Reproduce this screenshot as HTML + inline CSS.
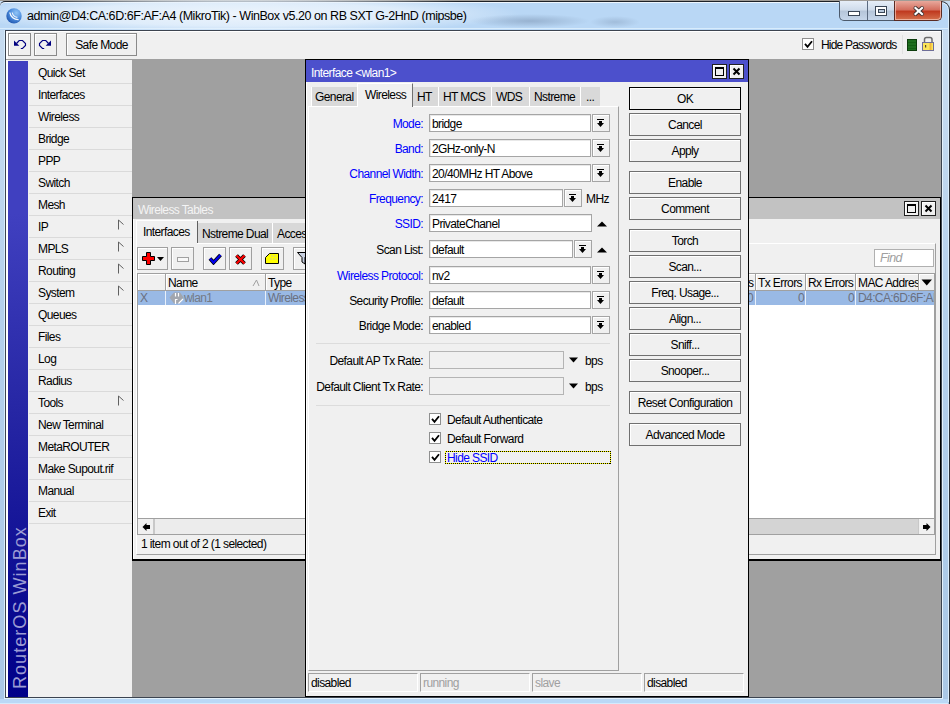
<!DOCTYPE html>
<html><head><meta charset="utf-8">
<style>
*{box-sizing:border-box}
html,body{margin:0;padding:0}
body{width:950px;height:704px;position:relative;overflow:hidden;background:#b4d0ec;font-family:"Liberation Sans",sans-serif;font-size:12px;color:#000}
.a{position:absolute}
.t{position:absolute;white-space:nowrap;line-height:13px;letter-spacing:-0.6px}
.btn{position:absolute;background:#f0f0f0;border:1px solid #707070;box-shadow:inset 1px 1px 0 #fff}
.btn span{position:absolute;left:0;right:0;text-align:center;white-space:nowrap;line-height:13px;letter-spacing:-0.6px}
.fld{position:absolute;background:#fff;border:1px solid #a5a5a5;box-shadow:inset 1px 1px 0 #e8e8e8}
.fld span{position:absolute;left:2px;top:3px;white-space:nowrap;line-height:13px;letter-spacing:-0.6px}
.dd{position:absolute;background:#f0f0f0;border:1px solid #a5a5a5;box-shadow:inset 1px 1px 0 #fff}
.lbl{position:absolute;white-space:nowrap;line-height:13px;text-align:right;letter-spacing:-0.6px}
</style></head><body>

<div class="a" style="left:0px;top:0px;width:950px;height:704px;background:linear-gradient(180deg,#c8dcf0 0,#c4daf0 15%,#b4d0ec 45%,#aac8e6 100%)"></div>
<div class="a" style="left:0px;top:0px;width:950px;height:1px;background:#a09c96"></div>
<div class="a" style="left:0px;top:1px;width:950px;height:29px;background:#b9d7f5;border-top:1px solid #1e2228;border-right:1px solid #2a3038;border-radius:5px 9px 0 0;box-shadow:inset 0 1px 0 #eef6fe,inset -1px 0 0 #dceefc"></div>
<div class="a" style="left:0px;top:28px;width:950px;height:1px;background:#d8ecfc"></div>
<div class="a" style="left:-40px;top:-6px;width:560px;height:40px;background:radial-gradient(ellipse 50% 50% at 50% 50%,rgba(240,246,252,0.95) 0,rgba(232,242,252,0.8) 60%,rgba(220,236,250,0) 100%)"></div>
<div class="a" style="left:470px;top:14px;width:120px;height:14px;background:radial-gradient(ellipse 50% 50% at 50% 50%,rgba(90,110,140,0.35),rgba(90,110,140,0) 100%)"></div>
<div class="a" style="left:590px;top:16px;width:50px;height:12px;background:radial-gradient(ellipse 50% 50% at 50% 50%,rgba(90,110,140,0.25),rgba(90,110,140,0) 100%)"></div>
<div class="a" style="left:949px;top:10px;width:1px;height:694px;background:#2a3038"></div>
<div class="a" style="left:948px;top:10px;width:1px;height:692px;background:#dceefc"></div>
<div class="a" style="left:4px;top:30px;width:1px;height:668px;background:#d8ecfc"></div>
<div class="a" style="left:4px;top:698px;width:939px;height:1px;background:#e4f2fc"></div>
<div class="a" style="left:0px;top:699px;width:948px;height:4px;background:#bad8f6"></div>
<div class="a" style="left:0px;top:703px;width:948px;height:1px;background:#d4eafc"></div>
<div class="a" style="left:942px;top:30px;width:1px;height:669px;background:#e4f2fc"></div>
<svg class="a" style="left:6px;top:8px" width="16" height="16" viewBox="0 0 16 16"><defs><radialGradient id="lg" cx="0.65" cy="0.3" r="0.75"><stop offset="0" stop-color="#90c4f6"/><stop offset="0.55" stop-color="#4c8cdc"/><stop offset="1" stop-color="#2258b0"/></radialGradient></defs><circle cx="8" cy="7.9" r="7.7" fill="url(#lg)"/><path d="M3.8 4.5 A8.5 8.5 0 0 0 12.6 11.7" fill="none" stroke="#fff" stroke-width="1.3" opacity="0.95"/><path d="M6.2 4.5 A6.2 6.2 0 0 0 11.4 9.4" fill="none" stroke="#fff" stroke-width="1.1" opacity="0.9"/></svg>
<div class="t" style="left:27px;top:9px;font-size:12.5px;line-height:14px;letter-spacing:-0.45px">admin@D4:CA:6D:6F:AF:A4 (MikroTik) - WinBox v5.20 on RB SXT G-2HnD (mipsbe)</div>
<div class="a" style="left:839px;top:1px;width:56px;height:20px;border:1px solid #4c5a6c;border-top:none;border-radius:0 0 0 5px;background:linear-gradient(180deg,#e6eef8 0,#d0dceb 45%,#b6c6da 55%,#c6d6ea 100%)"></div>
<div class="a" style="left:867px;top:1px;width:1px;height:19px;background:#5a6a80"></div>
<div class="a" style="left:894px;top:1px;width:48px;height:20px;border:1px solid #5a2a22;border-top:none;border-radius:0 0 5px 0;background:linear-gradient(180deg,#e8a89c 0,#d47060 45%,#c03a20 55%,#d4704c 100%)"></div>
<div class="a" style="left:848px;top:11px;width:12px;height:5px;background:#fff;border:1px solid #3a4656"></div>
<div class="a" style="left:875px;top:6px;width:12px;height:10px;background:#fff;border:1px solid #3a4656"></div>
<div class="a" style="left:878px;top:9px;width:7px;height:4px;background:#b9c9dc;border:1px solid #3a4656"></div>
<div class="a" style="left:895px;top:2px;width:46px;height:18px;border:1px solid rgba(255,220,210,0.6);border-top:none;border-radius:0 0 4px 0"></div>
<svg class="a" style="left:912px;top:5px" width="14" height="12"><path d="M3.5 3 L10 9 M10 3 L3.5 9" stroke="#3a3030" stroke-width="4" stroke-linecap="round"/><path d="M3.5 3 L10 9 M10 3 L3.5 9" stroke="#fff" stroke-width="2.2" stroke-linecap="square"/></svg>
<div class="a" style="left:5px;top:30px;width:937px;height:668px;background:#f0f0f0;border:1px solid #3c4450;box-shadow:inset 2px 1px 0 #fff"></div>
<div class="btn" style="left:8px;top:33px;width:23px;height:23px;border-color:#8a8a8a;"></div>
<div class="btn" style="left:34px;top:33px;width:23px;height:23px;border-color:#8a8a8a;"></div>
<svg class="a" style="left:13px;top:38px" width="16" height="14"><path d="M3.5 5.5 L6.2 2.5 H9.5 L12.5 5.5 V7.5 L9.5 10.5 H7.8" fill="none" stroke="#000080" stroke-width="1.15"/><path d="M1 2.5 V7.8 H6.3 Z" fill="#000080"/></svg>
<svg class="a" style="left:36px;top:38px;transform:scaleX(-1)" width="16" height="14"><path d="M3.5 5.5 L6.2 2.5 H9.5 L12.5 5.5 V7.5 L9.5 10.5 H7.8" fill="none" stroke="#000080" stroke-width="1.15"/><path d="M1 2.5 V7.8 H6.3 Z" fill="#000080"/></svg>
<div class="btn" style="left:66px;top:33px;width:71px;height:23px;border-color:#8a8a8a;"><span style="top:5px">Safe Mode</span></div>
<div class="a" style="left:802px;top:38px;width:12px;height:12px;background:#fff;border:1px solid #8e8e8e"></div>
<svg class="a" style="left:804px;top:40px" width="9" height="9" viewBox="0 0 9 9"><path d="M1 3.8 L3.5 6.8 L8 1.2" fill="none" stroke="#000" stroke-width="1.8"/></svg>
<div class="t" style="left:821px;top:39px;letter-spacing:-0.8px">Hide Passwords</div>
<div class="a" style="left:902px;top:35px;width:1px;height:19px;background:#e0e0e0"></div>
<div class="a" style="left:907px;top:39px;width:10px;height:12px;background:repeating-linear-gradient(180deg,#1e6e1e 0,#1e6e1e 2px,#146014 2px,#146014 3px);border:1px solid #0c3c0c"></div>
<svg class="a" style="left:921px;top:36px" width="14" height="16"><path d="M3.5 6.5 V3.5 Q3.5 1.5 5.5 1.5 H9 Q11 1.5 11 3.5 V6.5" stroke="#6c6c6c" stroke-width="1.5" fill="none"/><rect x="1.5" y="6.5" width="11" height="8" fill="#fbe45a" stroke="#6e6e98" stroke-width="1"/><rect x="8.5" y="7" width="2" height="7" fill="#f2b838"/><rect x="4" y="9" width="1.2" height="2.5" fill="#5a4a20"/></svg>
<div class="a" style="left:6px;top:59px;width:935px;height:1px;background:#a0a0a0"></div>
<div class="a" style="left:132px;top:60px;width:809px;height:637px;background:#a0a0a0"></div>
<div class="a" style="left:8px;top:61px;width:20px;height:636px;background:linear-gradient(180deg,#4040c0 0,#4040c0 24%,#2626a4 55%,#0a0a90 86%,#000088 100%)"></div>
<div class="t" style="left:10px;top:689px;font-size:18px;line-height:20px;color:#9c9cd4;letter-spacing:1.05px;transform:rotate(-90deg);transform-origin:0 0">RouterOS WinBox</div>
<div class="a" style="left:28px;top:61px;width:104px;height:636px;background:#f0f0f0"></div>
<div class="t" style="left:38px;top:67px;">Quick Set</div>
<div class="a" style="left:29px;top:83px;width:103px;height:1px;background:#dadada"></div>
<div class="t" style="left:38px;top:89px;">Interfaces</div>
<div class="a" style="left:29px;top:105px;width:103px;height:1px;background:#dadada"></div>
<div class="t" style="left:38px;top:111px;">Wireless</div>
<div class="a" style="left:29px;top:127px;width:103px;height:1px;background:#dadada"></div>
<div class="t" style="left:38px;top:133px;">Bridge</div>
<div class="a" style="left:29px;top:149px;width:103px;height:1px;background:#dadada"></div>
<div class="t" style="left:38px;top:155px;">PPP</div>
<div class="a" style="left:29px;top:171px;width:103px;height:1px;background:#dadada"></div>
<div class="t" style="left:38px;top:177px;">Switch</div>
<div class="a" style="left:29px;top:193px;width:103px;height:1px;background:#dadada"></div>
<div class="t" style="left:38px;top:199px;">Mesh</div>
<div class="a" style="left:29px;top:215px;width:103px;height:1px;background:#dadada"></div>
<div class="t" style="left:38px;top:221px;">IP</div>
<div class="a" style="left:29px;top:237px;width:103px;height:1px;background:#dadada"></div>
<svg class="a" style="left:117px;top:219px" width="8" height="12"><path d="M1.5 1 V10.5 M1.5 1 L6.5 5.5" stroke="#606060" stroke-width="1" fill="none"/></svg>
<div class="t" style="left:38px;top:243px;">MPLS</div>
<div class="a" style="left:29px;top:259px;width:103px;height:1px;background:#dadada"></div>
<svg class="a" style="left:117px;top:241px" width="8" height="12"><path d="M1.5 1 V10.5 M1.5 1 L6.5 5.5" stroke="#606060" stroke-width="1" fill="none"/></svg>
<div class="t" style="left:38px;top:265px;">Routing</div>
<div class="a" style="left:29px;top:281px;width:103px;height:1px;background:#dadada"></div>
<svg class="a" style="left:117px;top:263px" width="8" height="12"><path d="M1.5 1 V10.5 M1.5 1 L6.5 5.5" stroke="#606060" stroke-width="1" fill="none"/></svg>
<div class="t" style="left:38px;top:287px;">System</div>
<div class="a" style="left:29px;top:303px;width:103px;height:1px;background:#dadada"></div>
<svg class="a" style="left:117px;top:285px" width="8" height="12"><path d="M1.5 1 V10.5 M1.5 1 L6.5 5.5" stroke="#606060" stroke-width="1" fill="none"/></svg>
<div class="t" style="left:38px;top:309px;">Queues</div>
<div class="a" style="left:29px;top:325px;width:103px;height:1px;background:#dadada"></div>
<div class="t" style="left:38px;top:331px;">Files</div>
<div class="a" style="left:29px;top:347px;width:103px;height:1px;background:#dadada"></div>
<div class="t" style="left:38px;top:353px;">Log</div>
<div class="a" style="left:29px;top:369px;width:103px;height:1px;background:#dadada"></div>
<div class="t" style="left:38px;top:375px;">Radius</div>
<div class="a" style="left:29px;top:391px;width:103px;height:1px;background:#dadada"></div>
<div class="t" style="left:38px;top:397px;">Tools</div>
<div class="a" style="left:29px;top:413px;width:103px;height:1px;background:#dadada"></div>
<svg class="a" style="left:117px;top:395px" width="8" height="12"><path d="M1.5 1 V10.5 M1.5 1 L6.5 5.5" stroke="#606060" stroke-width="1" fill="none"/></svg>
<div class="t" style="left:38px;top:419px;">New Terminal</div>
<div class="a" style="left:29px;top:435px;width:103px;height:1px;background:#dadada"></div>
<div class="t" style="left:38px;top:441px;">MetaROUTER</div>
<div class="a" style="left:29px;top:457px;width:103px;height:1px;background:#dadada"></div>
<div class="t" style="left:38px;top:463px;">Make Supout.rif</div>
<div class="a" style="left:29px;top:479px;width:103px;height:1px;background:#dadada"></div>
<div class="t" style="left:38px;top:485px;">Manual</div>
<div class="a" style="left:29px;top:501px;width:103px;height:1px;background:#dadada"></div>
<div class="t" style="left:38px;top:507px;">Exit</div>
<div class="a" style="left:29px;top:523px;width:103px;height:1px;background:#dadada"></div>
<div class="a" style="left:132px;top:197px;width:809px;height:364px;background:#f0f0f0;border:1px solid #000;border-bottom-width:2px;border-right:none;box-shadow:inset 1px 1px 0 #fff"></div>
<div class="a" style="left:133px;top:198px;width:807px;height:21px;background:#c2c2c2"></div>
<div class="a" style="left:940px;top:197px;width:1px;height:364px;background:#000"></div>
<div class="t" style="left:138px;top:204px;color:#f4f4f4">Wireless Tables</div>
<div class="btn" style="left:904px;top:201px;width:15px;height:15px;border-color:#202020;"></div>
<div class="a" style="left:907px;top:204px;width:9px;height:9px;border:1px solid #000;border-top-width:2px"></div>
<div class="btn" style="left:921px;top:201px;width:15px;height:15px;border-color:#202020;"></div>
<svg class="a" style="left:924px;top:204px" width="9" height="9"><path d="M1.5 1.5 L7.5 7.5 M7.5 1.5 L1.5 7.5" stroke="#000" stroke-width="2"/></svg>
<div class="a" style="left:136px;top:243px;width:800px;height:312px;border-top:1px solid #fff;border-left:1px solid #fff;border-right:1px solid #a0a0a0;border-bottom:1px solid #a0a0a0"></div>
<div class="a" style="left:197px;top:223px;width:75px;height:20px;background:#d8d8d8;border-left:1px solid #707070"></div>
<div class="t" style="left:202px;top:228px;">Nstreme Dual</div>
<div class="a" style="left:272px;top:223px;width:40px;height:20px;background:#d8d8d8;border-left:1px solid #fff"></div>
<div class="t" style="left:277px;top:228px;">Access List</div>
<div class="a" style="left:136px;top:220px;width:61px;height:24px;background:#f0f0f0;border-top:1px solid #fff;border-left:1px solid #fff"></div>
<div class="a" style="left:197px;top:221px;width:1px;height:22px;background:#606060"></div>
<div class="t" style="left:143px;top:226px;">Interfaces</div>
<div class="btn" style="left:137px;top:247px;width:31px;height:23px;border-color:#a0a0a0;"></div>
<svg class="a" style="left:142px;top:252px" width="24" height="14"><path d="M4.5 0.5 H8.5 V4.5 H12.5 V8.5 H8.5 V12.5 H4.5 V8.5 H0.5 V4.5 H4.5 Z" fill="#ff0000" stroke="#000" stroke-width="1"/><path d="M15 5 H22 L18.5 9 Z" fill="#000"/></svg>
<div class="btn" style="left:171px;top:247px;width:23px;height:23px;border-color:#a0a0a0;"></div>
<div class="a" style="left:177px;top:257px;width:12px;height:5px;border:1px solid #a0a0a0;background:#f8f8f8"></div>
<div class="btn" style="left:203px;top:247px;width:23px;height:23px;border-color:#a0a0a0;"></div>
<svg class="a" style="left:208px;top:253px" width="15" height="12"><path d="M2 5.5 L5.5 9.5 L12.5 2" fill="none" stroke="#000" stroke-width="3.8"/><path d="M2 5.5 L5.5 9.5 L12.5 2" fill="none" stroke="#0000f0" stroke-width="2.2"/></svg>
<div class="btn" style="left:229px;top:247px;width:23px;height:23px;border-color:#a0a0a0;"></div>
<svg class="a" style="left:234px;top:253px" width="13" height="13"><path d="M2.5 2.5 L10.5 10.5 M10.5 2.5 L2.5 10.5" fill="none" stroke="#000" stroke-width="3.8"/><path d="M2.5 2.5 L10.5 10.5 M10.5 2.5 L2.5 10.5" fill="none" stroke="#ff0000" stroke-width="2.2"/></svg>
<div class="btn" style="left:261px;top:247px;width:23px;height:23px;border-color:#a0a0a0;"></div>
<svg class="a" style="left:265px;top:253px" width="15" height="11"><path d="M4.5 0.5 H13.5 V10.5 H0.5 V4.5 Z" fill="#ffff00" stroke="#000" stroke-width="1"/><path d="M6 3 H12 M5 6 H12" stroke="#c8c8a0" stroke-width="1" stroke-dasharray="2 1"/></svg>
<div class="btn" style="left:293px;top:247px;width:23px;height:23px;border-color:#a0a0a0;"></div>
<svg class="a" style="left:297px;top:252px" width="14" height="13"><path d="M0.5 0.5 H12.5 L8 5.5 V12 L5 10 V5.5 Z" fill="#c8d0e0" stroke="#000" stroke-width="1"/></svg>
<div class="fld" style="left:874px;top:249px;width:60px;height:18px;border-color:#b0b0b0;box-shadow:none"><span style="left:5px;top:2px;color:#a0a0a0;font-style:italic;font-size:12.5px">Find</span></div>
<div class="a" style="left:137px;top:273px;width:798px;height:262px;background:#fff;border:1px solid #a0a0a0"></div>
<div class="a" style="left:138px;top:274px;width:796px;height:17px;background:#f0f0f0;border-bottom:1px solid #a0a0a0;box-shadow:inset 1px 1px 0 #fff"></div>
<div class="a" style="left:165px;top:274px;width:1px;height:16px;background:#a0a0a0"></div>
<div class="a" style="left:166px;top:274px;width:1px;height:16px;background:#fff"></div>
<div class="a" style="left:265px;top:274px;width:1px;height:16px;background:#a0a0a0"></div>
<div class="a" style="left:266px;top:274px;width:1px;height:16px;background:#fff"></div>
<div class="a" style="left:755px;top:274px;width:1px;height:16px;background:#a0a0a0"></div>
<div class="a" style="left:756px;top:274px;width:1px;height:16px;background:#fff"></div>
<div class="a" style="left:805px;top:274px;width:1px;height:16px;background:#a0a0a0"></div>
<div class="a" style="left:806px;top:274px;width:1px;height:16px;background:#fff"></div>
<div class="a" style="left:855px;top:274px;width:1px;height:16px;background:#a0a0a0"></div>
<div class="a" style="left:856px;top:274px;width:1px;height:16px;background:#fff"></div>
<div class="a" style="left:918px;top:274px;width:1px;height:16px;background:#a0a0a0"></div>
<div class="a" style="left:919px;top:274px;width:1px;height:16px;background:#fff"></div>
<div class="t" style="left:168px;top:277px;">Name</div>
<svg class="a" style="left:252px;top:279px" width="8" height="8"><path d="M1 7 L4.5 1 L7 7" fill="none" stroke="#a0a0a0" stroke-width="1"/></svg>
<div class="t" style="left:268px;top:277px;">Type</div>
<div class="t" style="left:748px;top:277px;">s</div>
<div class="t" style="left:758px;top:277px;">Tx Errors</div>
<div class="t" style="left:808px;top:277px;">Rx Errors</div>
<div class="t" style="left:858px;top:277px;width:60px;overflow:hidden">MAC Address</div>
<svg class="a" style="left:921px;top:279px" width="12" height="8"><path d="M0.5 0.5 H11 L5.75 6.5 Z" fill="#000"/></svg>
<div class="a" style="left:138px;top:291px;width:796px;height:14px;background:#99b9e5"></div>
<div class="a" style="left:165px;top:291px;width:1px;height:14px;background:#e8f0fa"></div>
<div class="a" style="left:265px;top:291px;width:1px;height:14px;background:#e8f0fa"></div>
<div class="a" style="left:755px;top:291px;width:1px;height:14px;background:#e8f0fa"></div>
<div class="a" style="left:805px;top:291px;width:1px;height:14px;background:#e8f0fa"></div>
<div class="a" style="left:855px;top:291px;width:1px;height:14px;background:#e8f0fa"></div>
<div class="t" style="left:140px;top:292px;color:#6a7080">X</div>
<svg class="a" style="left:169px;top:292px" width="16" height="13"><path d="M0.5 5.5 L5 0.5 H11 L14.5 5.5 L11 11.5 H5 Z" fill="#a2a6ae"/><path d="M6.5 1 V4.5 M9.5 1 V4.5 M6.5 12 V7.5 H8.5 M9.5 11.5 L14 7" stroke="#fff" stroke-width="1.2" fill="none"/></svg>
<div class="t" style="left:184px;top:292px;color:#747a86">wlan1</div>
<div class="t" style="left:268px;top:292px;color:#6a7080">Wireless</div>
<div class="t" style="left:747px;top:292px;color:#6a7080">0</div>
<div class="t" style="left:798px;top:292px;color:#6a7080">0</div>
<div class="t" style="left:848px;top:292px;color:#6a7080">0</div>
<div class="t" style="left:858px;top:292px;color:#6a7080;width:76px;overflow:hidden">D4:CA:6D:6F:AF:A4</div>
<div class="a" style="left:138px;top:518px;width:796px;height:16px;background:#d4d4d4;border-top:1px solid #a0a0a0"></div>
<div class="a" style="left:154px;top:519px;width:450px;height:15px;background:#ececec;border-left:1px solid #c8c8c8"></div>
<div class="a" style="left:138px;top:519px;width:16px;height:15px;background:#f0f0f0;border-right:1px solid #c8c8c8"></div>
<svg class="a" style="left:142px;top:522px" width="9" height="10"><path d="M0.5 5 L4.5 1 V3 H8 V7 H4.5 V9 Z" fill="#000"/></svg>
<div class="a" style="left:918px;top:519px;width:16px;height:15px;background:#f0f0f0;border-left:1px solid #c8c8c8"></div>
<svg class="a" style="left:922px;top:522px" width="9" height="10"><path d="M8.5 5 L4.5 1 V3 H1 V7 H4.5 V9 Z" fill="#000"/></svg>
<div class="t" style="left:141px;top:538px;">1 item out of 2 (1 selected)</div>
<div class="a" style="left:305px;top:59px;width:444px;height:638px;background:#f0f0f0;border:1px solid #000;box-shadow:inset 1px 1px 0 #fff"></div>
<div class="a" style="left:306px;top:60px;width:442px;height:22px;background:#4c50cc"></div>
<div class="t" style="left:311px;top:67px;color:#fff">Interface &lt;wlan1&gt;</div>
<div class="btn" style="left:712px;top:64px;width:15px;height:15px;border-color:#202020;"></div>
<div class="a" style="left:715px;top:67px;width:9px;height:9px;border:1px solid #000;border-top-width:2px"></div>
<div class="btn" style="left:729px;top:64px;width:15px;height:15px;border-color:#202020;"></div>
<svg class="a" style="left:732px;top:67px" width="9" height="9"><path d="M1.5 1.5 L7.5 7.5 M7.5 1.5 L1.5 7.5" stroke="#000" stroke-width="2"/></svg>
<div class="a" style="left:308px;top:106px;width:311px;height:565px;border-top:1px solid #fff;border-left:1px solid #fff;border-right:1px solid #a0a0a0;border-bottom:1px solid #a0a0a0"></div>
<div class="a" style="left:311px;top:87px;width:46px;height:19px;background:#d9d9d9;border-left:1px solid #fff"></div>
<div class="t" style="left:315px;top:91px;">General</div>
<div class="a" style="left:412px;top:87px;width:26px;height:19px;background:#d9d9d9;border-left:1px solid #fff"></div>
<div class="t" style="left:417px;top:91px;">HT</div>
<div class="a" style="left:438px;top:87px;width:53px;height:19px;background:#d9d9d9;border-left:1px solid #fff"></div>
<div class="t" style="left:443px;top:91px;">HT MCS</div>
<div class="a" style="left:491px;top:87px;width:38px;height:19px;background:#d9d9d9;border-left:1px solid #fff"></div>
<div class="t" style="left:496px;top:91px;">WDS</div>
<div class="a" style="left:529px;top:87px;width:51px;height:19px;background:#d9d9d9;border-left:1px solid #fff"></div>
<div class="t" style="left:534px;top:91px;">Nstreme</div>
<div class="a" style="left:580px;top:87px;width:20px;height:19px;background:#d9d9d9;border-left:1px solid #fff"></div>
<div class="t" style="left:586px;top:91px;">...</div>
<div class="a" style="left:357px;top:83px;width:56px;height:24px;background:#f0f0f0;border-top:1px solid #fff;border-left:1px solid #fff;border-right:1px solid #707070"></div>
<div class="t" style="left:365px;top:89px;">Wireless</div>
<div class="lbl" style="left:300px;width:123px;top:118px;color:#0000ff">Mode:</div>
<div class="fld" style="left:429px;top:114px;width:162px;height:18px"><span>bridge</span></div>
<div class="dd" style="left:592px;top:114px;width:18px;height:18px"></div>
<svg class="a" style="left:597px;top:119px" width="8" height="9"><path d="M0 0.5 H7" stroke="#000" stroke-width="1"/><path d="M2 2 H5 V4 H7 L3.5 8 L0 4 H2 Z" fill="#000"/></svg>
<div class="lbl" style="left:300px;width:123px;top:143px;color:#0000ff">Band:</div>
<div class="fld" style="left:429px;top:139px;width:162px;height:18px"><span>2GHz-only-N</span></div>
<div class="dd" style="left:592px;top:139px;width:18px;height:18px"></div>
<svg class="a" style="left:597px;top:144px" width="8" height="9"><path d="M0 0.5 H7" stroke="#000" stroke-width="1"/><path d="M2 2 H5 V4 H7 L3.5 8 L0 4 H2 Z" fill="#000"/></svg>
<div class="lbl" style="left:300px;width:123px;top:168px;color:#0000ff">Channel Width:</div>
<div class="fld" style="left:429px;top:164px;width:162px;height:18px"><span>20/40MHz HT Above</span></div>
<div class="dd" style="left:592px;top:164px;width:18px;height:18px"></div>
<svg class="a" style="left:597px;top:169px" width="8" height="9"><path d="M0 0.5 H7" stroke="#000" stroke-width="1"/><path d="M2 2 H5 V4 H7 L3.5 8 L0 4 H2 Z" fill="#000"/></svg>
<div class="lbl" style="left:300px;width:123px;top:193px;color:#0000ff">Frequency:</div>
<div class="fld" style="left:429px;top:189px;width:134px;height:18px"><span>2417</span></div>
<div class="dd" style="left:564px;top:189px;width:18px;height:18px"></div>
<svg class="a" style="left:569px;top:194px" width="8" height="9"><path d="M0 0.5 H7" stroke="#000" stroke-width="1"/><path d="M2 2 H5 V4 H7 L3.5 8 L0 4 H2 Z" fill="#000"/></svg>
<div class="t" style="left:586px;top:193px;">MHz</div>
<div class="lbl" style="left:300px;width:123px;top:218px;color:#0000ff">SSID:</div>
<div class="fld" style="left:429px;top:214px;width:163px;height:18px"><span>PrivateChanel</span></div>
<svg class="a" style="left:597px;top:221px" width="10" height="6"><path d="M0 5.5 L5 0.5 L10 5.5 Z" fill="#000"/></svg>
<div class="lbl" style="left:300px;width:123px;top:244px;color:#000">Scan List:</div>
<div class="fld" style="left:429px;top:240px;width:144px;height:18px"><span>default</span></div>
<div class="dd" style="left:574px;top:240px;width:18px;height:18px"></div>
<svg class="a" style="left:579px;top:245px" width="8" height="9"><path d="M0 0.5 H7" stroke="#000" stroke-width="1"/><path d="M2 2 H5 V4 H7 L3.5 8 L0 4 H2 Z" fill="#000"/></svg>
<svg class="a" style="left:597px;top:247px" width="10" height="6"><path d="M0 5.5 L5 0.5 L10 5.5 Z" fill="#000"/></svg>
<div class="lbl" style="left:300px;width:123px;top:270px;color:#0000ff">Wireless Protocol:</div>
<div class="fld" style="left:429px;top:266px;width:162px;height:18px"><span>nv2</span></div>
<div class="dd" style="left:592px;top:266px;width:18px;height:18px"></div>
<svg class="a" style="left:597px;top:271px" width="8" height="9"><path d="M0 0.5 H7" stroke="#000" stroke-width="1"/><path d="M2 2 H5 V4 H7 L3.5 8 L0 4 H2 Z" fill="#000"/></svg>
<div class="lbl" style="left:300px;width:123px;top:295px;color:#000">Security Profile:</div>
<div class="fld" style="left:429px;top:291px;width:162px;height:18px"><span>default</span></div>
<div class="dd" style="left:592px;top:291px;width:18px;height:18px"></div>
<svg class="a" style="left:597px;top:296px" width="8" height="9"><path d="M0 0.5 H7" stroke="#000" stroke-width="1"/><path d="M2 2 H5 V4 H7 L3.5 8 L0 4 H2 Z" fill="#000"/></svg>
<div class="lbl" style="left:300px;width:123px;top:320px;color:#000">Bridge Mode:</div>
<div class="fld" style="left:429px;top:316px;width:162px;height:18px"><span>enabled</span></div>
<div class="dd" style="left:592px;top:316px;width:18px;height:18px"></div>
<svg class="a" style="left:597px;top:321px" width="8" height="9"><path d="M0 0.5 H7" stroke="#000" stroke-width="1"/><path d="M2 2 H5 V4 H7 L3.5 8 L0 4 H2 Z" fill="#000"/></svg>
<div class="a" style="left:316px;top:343px;width:294px;height:1px;background:#dcdcdc"></div>
<div class="lbl" style="left:300px;width:123px;top:355px">Default AP Tx Rate:</div>
<div class="a" style="left:429px;top:351px;width:135px;height:18px;background:#f0f0f0;border:1px solid #b4b4b4"></div>
<svg class="a" style="left:569px;top:357px" width="10" height="6"><path d="M0 0.5 H9 L4.5 5.5 Z" fill="#000"/></svg>
<div class="t" style="left:585px;top:355px;">bps</div>
<div class="lbl" style="left:300px;width:123px;top:381px">Default Client Tx Rate:</div>
<div class="a" style="left:429px;top:377px;width:135px;height:18px;background:#f0f0f0;border:1px solid #b4b4b4"></div>
<svg class="a" style="left:569px;top:383px" width="10" height="6"><path d="M0 0.5 H9 L4.5 5.5 Z" fill="#000"/></svg>
<div class="t" style="left:585px;top:381px;">bps</div>
<div class="a" style="left:316px;top:405px;width:294px;height:1px;background:#dcdcdc"></div>
<div class="a" style="left:429px;top:413px;width:12px;height:12px;background:#fff;border:1px solid #8e8f8f"></div>
<svg class="a" style="left:431px;top:415px" width="9" height="9" viewBox="0 0 9 9"><path d="M1 3.8 L3.5 6.8 L8 1.2" fill="none" stroke="#000" stroke-width="1.8"/></svg>
<div class="t" style="left:447px;top:414px;">Default Authenticate</div>
<div class="a" style="left:429px;top:432px;width:12px;height:12px;background:#fff;border:1px solid #8e8f8f"></div>
<svg class="a" style="left:431px;top:434px" width="9" height="9" viewBox="0 0 9 9"><path d="M1 3.8 L3.5 6.8 L8 1.2" fill="none" stroke="#000" stroke-width="1.8"/></svg>
<div class="t" style="left:447px;top:433px;">Default Forward</div>
<div class="a" style="left:429px;top:451px;width:12px;height:12px;background:#fff;border:1px solid #8e8f8f"></div>
<svg class="a" style="left:431px;top:453px" width="9" height="9" viewBox="0 0 9 9"><path d="M1 3.8 L3.5 6.8 L8 1.2" fill="none" stroke="#000" stroke-width="1.8"/></svg>
<svg class="a" style="left:445px;top:451px" width="166" height="13" shape-rendering="crispEdges"><rect x="0.5" y="0.5" width="165" height="12" fill="none" stroke="#ffff00" stroke-width="1"/><rect x="0.5" y="0.5" width="165" height="12" fill="none" stroke="#000" stroke-width="1" stroke-dasharray="1 1"/></svg>
<div class="t" style="left:447px;top:452px;color:#0000ff">Hide SSID</div>
<div class="btn" style="left:629px;top:87px;width:112px;height:23px;border-color:#000;"><span style="top:5px">OK</span></div>
<div class="btn" style="left:629px;top:113px;width:112px;height:23px;border-color:#707070;"><span style="top:5px">Cancel</span></div>
<div class="btn" style="left:629px;top:139px;width:112px;height:23px;border-color:#707070;"><span style="top:5px">Apply</span></div>
<div class="btn" style="left:629px;top:171px;width:112px;height:23px;border-color:#707070;"><span style="top:5px">Enable</span></div>
<div class="btn" style="left:629px;top:197px;width:112px;height:23px;border-color:#707070;"><span style="top:5px">Comment</span></div>
<div class="btn" style="left:629px;top:229px;width:112px;height:23px;border-color:#707070;"><span style="top:5px">Torch</span></div>
<div class="btn" style="left:629px;top:255px;width:112px;height:23px;border-color:#707070;"><span style="top:5px">Scan...</span></div>
<div class="btn" style="left:629px;top:281px;width:112px;height:23px;border-color:#707070;"><span style="top:5px">Freq. Usage...</span></div>
<div class="btn" style="left:629px;top:307px;width:112px;height:23px;border-color:#707070;"><span style="top:5px">Align...</span></div>
<div class="btn" style="left:629px;top:333px;width:112px;height:23px;border-color:#707070;"><span style="top:5px">Sniff...</span></div>
<div class="btn" style="left:629px;top:359px;width:112px;height:23px;border-color:#707070;"><span style="top:5px">Snooper...</span></div>
<div class="btn" style="left:629px;top:391px;width:112px;height:23px;border-color:#707070;"><span style="top:5px">Reset Configuration</span></div>
<div class="btn" style="left:629px;top:423px;width:112px;height:23px;border-color:#707070;"><span style="top:5px">Advanced Mode</span></div>
<div class="a" style="left:308px;top:673px;width:110px;height:19px;border:1px solid #a0a0a0;border-right-color:#fff;border-bottom-color:#fff"></div>
<div class="t" style="left:311px;top:677px;color:#000">disabled</div>
<div class="a" style="left:420px;top:673px;width:110px;height:19px;border:1px solid #a0a0a0;border-right-color:#fff;border-bottom-color:#fff"></div>
<div class="t" style="left:423px;top:677px;color:#a0a0a0">running</div>
<div class="a" style="left:532px;top:673px;width:110px;height:19px;border:1px solid #a0a0a0;border-right-color:#fff;border-bottom-color:#fff"></div>
<div class="t" style="left:535px;top:677px;color:#a0a0a0">slave</div>
<div class="a" style="left:644px;top:673px;width:100px;height:19px;border:1px solid #a0a0a0;border-right-color:#fff;border-bottom-color:#fff"></div>
<div class="t" style="left:647px;top:677px;color:#000">disabled</div>
</body></html>
